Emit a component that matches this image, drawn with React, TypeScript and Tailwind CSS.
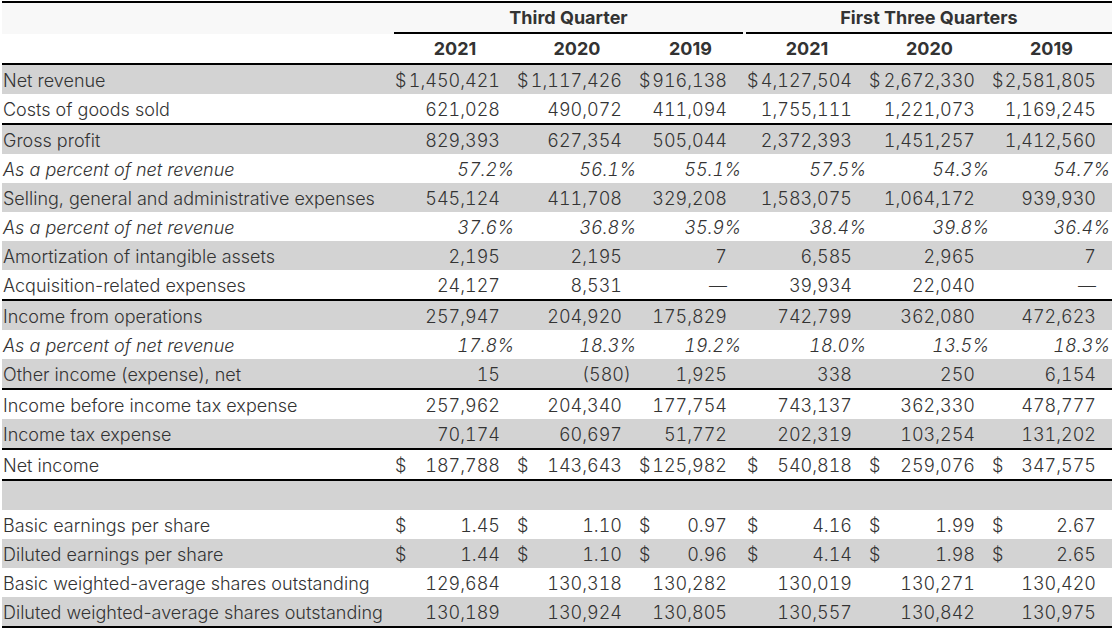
type Row = {
  label: string;
  cells: string[];
  dollar?: boolean;
  pct?: boolean;
  line?: boolean;
};

const rows: Row[] = [
  { label: "Net revenue", cells: ["1,450,421", "1,117,426", "916,138", "4,127,504", "2,672,330", "2,581,805"], dollar: true, line: true },
  { label: "Costs of goods sold", cells: ["621,028", "490,072", "411,094", "1,755,111", "1,221,073", "1,169,245"] },
  { label: "Gross profit", cells: ["829,393", "627,354", "505,044", "2,372,393", "1,451,257", "1,412,560"], line: true },
  { label: "As a percent of net revenue", cells: ["57.2%", "56.1%", "55.1%", "57.5%", "54.3%", "54.7%"], pct: true },
  { label: "Selling, general and administrative expenses", cells: ["545,124", "411,708", "329,208", "1,583,075", "1,064,172", "939,930"] },
  { label: "As a percent of net revenue", cells: ["37.6%", "36.8%", "35.9%", "38.4%", "39.8%", "36.4%"], pct: true },
  { label: "Amortization of intangible assets", cells: ["2,195", "2,195", "7", "6,585", "2,965", "7"] },
  { label: "Acquisition-related expenses", cells: ["24,127", "8,531", "—", "39,934", "22,040", "—"] },
  { label: "Income from operations", cells: ["257,947", "204,920", "175,829", "742,799", "362,080", "472,623"], line: true },
  { label: "As a percent of net revenue", cells: ["17.8%", "18.3%", "19.2%", "18.0%", "13.5%", "18.3%"], pct: true },
  { label: "Other income (expense), net", cells: ["15", "(580)", "1,925", "338", "250", "6,154"] },
  { label: "Income before income tax expense", cells: ["257,962", "204,340", "177,754", "743,137", "362,330", "478,777"], line: true },
  { label: "Income tax expense", cells: ["70,174", "60,697", "51,772", "202,319", "103,254", "131,202"] },
  { label: "Net income", cells: ["187,788", "143,643", "125,982", "540,818", "259,076", "347,575"], dollar: true, line: true },
  { label: "", cells: ["", "", "", "", "", ""], line: true },
  { label: "Basic earnings per share", cells: ["1.45", "1.10", "0.97", "4.16", "1.99", "2.67"], dollar: true },
  { label: "Diluted earnings per share", cells: ["1.44", "1.10", "0.96", "4.14", "1.98", "2.65"], dollar: true },
  { label: "Basic weighted-average shares outstanding", cells: ["129,684", "130,318", "130,282", "130,019", "130,271", "130,420"] },
  { label: "Diluted weighted-average shares outstanding", cells: ["130,189", "130,924", "130,805", "130,557", "130,842", "130,975"] },
];

const grid = "grid grid-cols-[392px_122px_122px_105px_3px_122px_123px_121px]";

const Value = ({ v, dollar, pct }: { v: string; dollar?: boolean; pct?: boolean }) => {
  if (pct) {
    return <div className="flex items-center justify-end pr-[2px] pt-px italic tabular-nums">{v}</div>;
  }
  const neg = v.startsWith("(");
  return (
    <div className={`flex items-center justify-between pl-px pt-px tabular-nums ${neg ? "pr-[7px]" : "pr-[16px]"}`}>
      <span>{dollar ? "$" : ""}</span>
      <span>{v}</span>
    </div>
  );
};

const App = () => {
  return (
    <div className="bg-white w-[1113px] h-[629px] pt-px pl-[2px] font-['Inter',sans-serif] text-[18px] text-[#333]">
      <div className="w-[1110px]">
        <div className="h-[2px] bg-black" />
        <div className={`${grid} h-[31px] bg-[#f8f8f8] font-bold`}>
          <div />
          <div className="col-span-3 flex items-center justify-center border-b-2 border-black">
            Third Quarter
          </div>
          <div />
          <div className="col-span-3 flex items-center justify-center border-b-2 border-black">
            First Three Quarters
          </div>
        </div>
        <div className={`${grid} h-[29px] font-bold`}>
          <div />
          <div className="flex items-center justify-center">2021</div>
          <div className="flex items-center justify-center">2020</div>
          <div className="flex items-center justify-center">2019</div>
          <div />
          <div className="flex items-center justify-center">2021</div>
          <div className="flex items-center justify-center">2020</div>
          <div className="flex items-center justify-center">2019</div>
        </div>
        {rows.map((r, i) => (
          <div key={i}>
            {r.line && <div className="h-[2px] bg-black" />}
            <div className={`${grid} h-[29px] font-light ${i % 2 === 0 ? "bg-[#d3d3d3]" : "bg-white"}`}>
              <div className={`flex items-center pl-px pt-px whitespace-nowrap ${r.pct ? "italic" : ""}`}>{r.label}</div>
              {r.cells.slice(0, 3).map((c, j) => (
                <Value key={j} v={c} dollar={r.dollar} pct={r.pct} />
              ))}
              <div />
              {r.cells.slice(3).map((c, j) => (
                <Value key={j} v={c} dollar={r.dollar} pct={r.pct} />
              ))}
            </div>
          </div>
        ))}
        <div className="h-[2px] bg-black" />
      </div>
    </div>
  );
};

export default App;
